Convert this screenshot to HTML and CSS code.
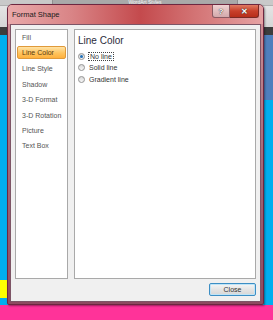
FILE: index.html
```html
<!DOCTYPE html>
<html lang="en">

<head>
  <meta charset="UTF-8">
  <title>Format Shape</title>
  <link rel="stylesheet" href="styles.css">
</head>

<body>
  <div class="screen">
    <div class="desk">
      <div class="ribbon">
        <span class="sep"></span>
        <span class="group-label">WordArt Styles</span>
        <span class="sep"></span>
      </div>
      <div class="toolbar"></div>
      <div class="darkbar"></div>
      <div class="work">
        <div class="edge-left">
          <div class="fill-cyan"></div>
          <div class="yellow"></div>
          <div class="cyan-tail"></div>
        </div>
        <div class="edge-right">
          <div class="steel"></div>
          <div class="fill-cyan"></div>
        </div>
      </div>
      <div class="pink"></div>
    </div>

    <div class="dialog">
      <div class="titlebar">
        <span class="title">Format Shape</span>
        <span class="tb-btn help">?</span>
        <span class="tb-btn close-x">&#x2715;</span>
      </div>

      <div class="body">
        <div class="panels">
          <ul class="nav">
            <li>Fill</li>
            <li class="active">Line Color</li>
            <li>Line Style</li>
            <li>Shadow</li>
            <li>3-D Format</li>
            <li>3-D Rotation</li>
            <li>Picture</li>
            <li>Text Box</li>
          </ul>

          <div class="page">
            <h2>Line Color</h2>
            <label class="opt"><span class="radio checked"></span><span class="focus">No line</span></label>
            <label class="opt"><span class="radio"></span><span>Solid line</span></label>
            <label class="opt"><span class="radio"></span><span>Gradient line</span></label>
          </div>
        </div>

        <div class="footer">
          <button class="close-btn">Close</button>
        </div>
      </div>
    </div>
  </div>
</body>

</html>
```

FILE: styles.css
```css
body {
  margin: 0;
  font-family: "Liberation Sans", Arial, sans-serif;
  font-size: 7px;
}

.screen {
  position: relative;
  width: 273px;
  height: 320px;
  overflow: hidden;
}

/* the office window behind the dialog */
.desk {
  display: flex;
  flex-direction: column;
  height: 100%;
}

.ribbon {
  height: 5px;
  display: flex;
  background: #c9c9c9;
  overflow: hidden;
}

.ribbon .sep {
  width: 52px;
  border-right: 1px solid #8f8f8f;
}

.ribbon .sep:last-child {
  width: auto;
  flex: 1;
  border-right: none;
  border-left: 1px solid #8f8f8f;
}

.group-label {
  width: 184px;
  background: #a9a9a9;
  color: #f4f4f4;
  text-align: center;
  font-size: 5px;
  line-height: 5px;
}

.toolbar {
  height: 22px;
  background: linear-gradient(#e4e4e4, #d6d6d6);
  border-top: 1px solid #b0b0b0;
  box-sizing: border-box;
}

.darkbar {
  height: 8px;
  background: #3d3d3d;
}

.work {
  flex: 1;
  display: flex;
  justify-content: space-between;
  background: #00aeef;
}

.edge-left,
.edge-right {
  display: flex;
  flex-direction: column;
}

.edge-left {
  width: 7px;
}

.edge-right {
  width: 10px;
}

.fill-cyan {
  flex: 1;
  background: #00aeef;
}

.yellow {
  height: 18px;
  background: #ffff00;
}

.cyan-tail {
  height: 7px;
  background: #00aeef;
}

.steel {
  height: 65px;
  background: #4f7fbd;
}

.pink {
  height: 15px;
  background: #ff3399;
}

/* dialog window */
.dialog {
  position: absolute;
  left: 7px;
  top: 4px;
  width: 257px;
  height: 301px;
  box-sizing: border-box;
  border: 1px solid #6e2740;
  border-radius: 5px 5px 2px 2px;
  background: linear-gradient(to bottom, #d88f95 0%, #c4868f 15%, #9e6474 60%, #8e4a60 100%);
  display: flex;
  flex-direction: column;
  box-shadow: 1px 1px 2px rgba(0, 0, 0, 0.4);
}

.titlebar {
  height: 19px;
  display: flex;
  align-items: flex-start;
  background: linear-gradient(to right, #e9a9aa 0%, #d98486 25%, #c44a4d 52%, #d27172 72%, #e6a2a3 100%);
  border-radius: 4px 4px 0 0;
}

.title {
  align-self: center;
  margin-left: 4px;
  flex: 1;
  font-size: 7.5px;
  color: #1b1b1b;
}

.tb-btn {
  height: 13px;
  display: flex;
  align-items: center;
  justify-content: center;
  box-sizing: border-box;
  color: #fff;
  font-weight: bold;
  text-shadow: 0 0 1px #333, 0 0 1px #333;
}

.help {
  width: 18px;
  font-size: 8px;
  background: linear-gradient(#efd2d2, #d3a9ab);
  border: 1px solid #8a5a62;
  border-top: none;
  border-radius: 0 0 0 3px;
}

.close-x {
  width: 29px;
  margin-right: 4px;
  font-size: 8px;
  background: linear-gradient(#e07a62, #c8402a 50%, #b72e1a);
  border: 1px solid #7a2a24;
  border-left: none;
  border-top: none;
  border-radius: 0 0 3px 0;
}

.body {
  flex: 1;
  margin: 0 2px 2px;
  background: #f0f0f0;
  border: 1px solid #7d5566;
  padding: 4px 4px 5px;
  display: flex;
  flex-direction: column;
  gap: 4px;
}

.panels {
  flex: 1;
  display: flex;
  gap: 6px;
}

ul {
  list-style-type: none;
  padding: 0;
  margin: 0;
}

.nav {
  width: 53px;
  box-sizing: border-box;
  background: #fff;
  border: 1px solid #a9a9a9;
  padding: 0 1px;
}

.nav li {
  height: 15.4px;
  display: flex;
  align-items: center;
  padding-left: 5px;
  color: #555;
  box-sizing: border-box;
}

.nav li.active {
  height: 13px;
  margin: 1px 0 1.8px;
  color: #5a3a10;
  background: linear-gradient(#ffe3a6, #ffc45e 55%, #ffb13d);
  border: 1px solid #e09a3a;
  border-radius: 2px;
  padding-left: 4px;
}

.page {
  flex: 1;
  background: #fff;
  border: 1px solid #a9a9a9;
  padding: 4px 3px;
  display: flex;
  flex-direction: column;
}

h2 {
  margin: 0 0 3px;
  font-size: 10px;
  font-weight: normal;
  color: #2c2c3c;
  line-height: 14px;
}

.opt {
  display: flex;
  align-items: center;
  gap: 4px;
  height: 11.3px;
  color: #333;
}

.radio {
  width: 7px;
  height: 7px;
  box-sizing: border-box;
  border-radius: 50%;
  border: 1px solid #939393;
  background: linear-gradient(#d8d8d8, #f8f8f8);
  display: flex;
  align-items: center;
  justify-content: center;
}

.radio.checked::after {
  content: "";
  width: 3px;
  height: 3px;
  border-radius: 50%;
  background: #1f6fb8;
}

.focus {
  outline: 1px dotted #444;
  padding: 0 1px;
}

.footer {
  display: flex;
  justify-content: flex-end;
}

.close-btn {
  width: 47px;
  height: 13px;
  padding: 0;
  font-family: "Liberation Sans", Arial, sans-serif;
  font-size: 7px;
  color: #333;
  background: linear-gradient(#f6f6f6, #e4e4e4 50%, #d6d6d6);
  border: 1px solid #3c8ec4;
  border-radius: 2px;
  box-shadow: inset 0 0 0 1px #bfe4f7;
}
```
